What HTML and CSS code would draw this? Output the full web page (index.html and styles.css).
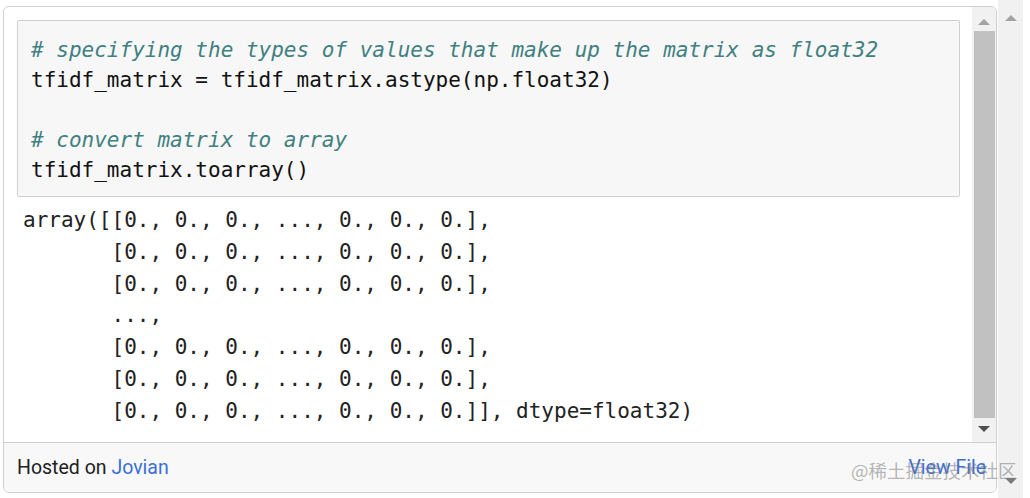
FILE: index.html
```html
<!DOCTYPE html>
<html>
<head>
<meta charset="utf-8">
<link rel="stylesheet" href="styles.css">
</head>
<body>
<div class="page">
  <div class="frame">
    <div class="viewport">
      <div class="content">
        <div class="cell-input"><pre class="code"><span class="c"># specifying the types of values that make up the matrix as float32</span>
tfidf_matrix = tfidf_matrix.astype(np.float32)

<span class="c"># convert matrix to array</span>
tfidf_matrix.toarray()</pre></div>
        <pre class="output">array([[0., 0., 0., ..., 0., 0., 0.],
       [0., 0., 0., ..., 0., 0., 0.],
       [0., 0., 0., ..., 0., 0., 0.],
       ...,
       [0., 0., 0., ..., 0., 0., 0.],
       [0., 0., 0., ..., 0., 0., 0.],
       [0., 0., 0., ..., 0., 0., 0.]], dtype=float32)</pre>
      </div>
      <div class="vscroll">
        <div class="arrow up"></div>
        <div class="thumb"></div>
        <div class="arrow down"></div>
      </div>
    </div>
    <div class="footer">
      <span class="hosted">Hosted on <a class="link">Jovian</a></span>
      <a class="link">View File</a>
    </div>
  </div>
  <div class="pagescroll">
    <div class="arrow up light"></div>
    <div class="spacer"></div>
    <div class="arrow down"></div>
  </div>
  <div class="watermark">@稀土掘金技术社区</div>
</div>
</body>
</html>
```
FILE: styles.css
```css
html, body {
  margin: 0;
  padding: 0;
  background: #fff;
}
.page {
  position: relative;
  display: flex;
  width: 1030px;
  height: 498px;
  overflow: hidden;
}
.frame {
  margin: 6px 0 0 3px;
  width: 992px;
  height: 485px;
  border: 1px solid #cfcfcf;
  border-radius: 6px;
  display: flex;
  flex-direction: column;
  overflow: hidden;
  background: #fff;
}
.viewport {
  flex: 1;
  display: flex;
  min-height: 0;
}
.content {
  flex: 1;
  padding: 13px 12px 0 13px;
}
.cell-input {
  background: #f7f7f7;
  border: 1px solid #cfcfcf;
  border-radius: 2px;
  height: 177px;
  box-sizing: border-box;
  padding: 14px 13px 0 13px;
}
pre {
  margin: 0;
  font-family: "DejaVu Sans Mono", "Liberation Mono", monospace;
  font-size: 21px;
}
.code {
  line-height: 30px;
  color: #111;
}
.code .c {
  color: #408080;
  font-style: italic;
}
.output {
  margin-top: 8px;
  padding-left: 6px;
  line-height: 31.8px;
  color: #222;
}
.vscroll {
  width: 24px;
  background: #f1f1f1;
  display: flex;
  flex-direction: column;
  align-items: center;
  padding-top: 1px;
}
.vscroll .thumb {
  width: 21px;
  flex: 1;
  background: #c1c1c1;
  margin: 6px 0 8px;
}
.arrow {
  width: 0;
  height: 0;
  border-left: 6px solid transparent;
  border-right: 6px solid transparent;
}
.arrow.up {
  border-bottom: 6px solid #a3a3a3;
  margin-top: 11px;
}
.arrow.down {
  border-top: 6px solid #505050;
  margin-bottom: 10px;
}
.footer {
  height: 49px;
  flex-shrink: 0;
  border-top: 1px solid #cfcfcf;
  background: #f8f8f8;
  display: flex;
  align-items: center;
  justify-content: space-between;
  padding: 0 10px 0 13px;
  font-family: Roboto, "Noto Sans", sans-serif;
  font-size: 19.5px;
  color: #212121;
}
.link {
  color: #3b6fd9;
}
.pagescroll {
  margin-left: 1px;
  width: 25px;
  height: 498px;
  background: #f1f1f1;
  display: flex;
  flex-direction: column;
  align-items: center;
}
.pagescroll .spacer {
  flex: 1;
}
.pagescroll .arrow.up {
  margin-top: 15px;
}
.pagescroll .arrow.down {
  margin-bottom: 14px;
  border-top-color: #7a7a7a;
}
.watermark {
  position: absolute;
  left: 851px;
  top: 457px;
  font-family: "Noto Sans CJK SC", sans-serif;
  font-size: 18.5px;
  color: rgba(120, 120, 120, 0.55);
  white-space: nowrap;
}
```
